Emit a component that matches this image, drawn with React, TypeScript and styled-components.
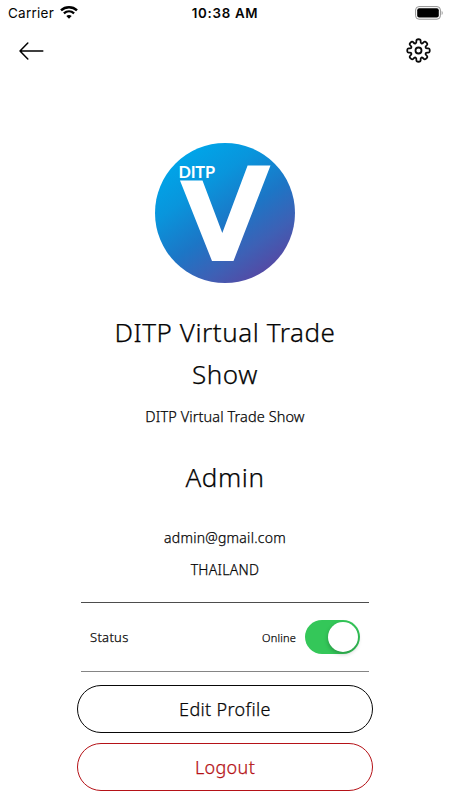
import React from "react";
import styled, { createGlobalStyle } from "styled-components";

const GlobalStyle = createGlobalStyle`
  * { box-sizing: border-box; }
  body { margin: 0; background: #fff; color: #050505; }
  button { padding: 0; background: none; border: 0; color: inherit; cursor: pointer; }
`;

const Screen = styled.div`
  width: 450px;
  height: 800px;
  overflow: hidden;
  display: flex;
  flex-direction: column;
  background: #fff;
  font-family: "Noto Sans", "Open Sans", sans-serif;
  font-weight: 300;
`;

const StatusBar = styled.header`
  flex: none;
  height: 26px;
  padding: 0 7px 1px 8px;
  display: grid;
  grid-template-columns: 1fr auto 1fr;
  align-items: center;
  font-family: Inter, sans-serif;
  font-size: 13.5px;
  font-weight: 400;
`;

const Carrier = styled.div`
  display: flex;
  align-items: center;
  gap: 6px;
  letter-spacing: 0.25px;
`;

const Clock = styled.time`
  margin-right: 1px;
  font-size: 13.3px;
  font-weight: 600;
  letter-spacing: 0.7px;
`;

const BatterySlot = styled.div`
  display: flex;
  justify-content: flex-end;
`;

const NavBar = styled.nav`
  flex: none;
  height: 49px;
  padding: 0 19px;
  display: flex;
  align-items: center;
  justify-content: space-between;
`;

const IconButton = styled.button`
  display: flex;
`;

const Profile = styled.main`
  flex: none;
  width: 296px;
  margin: 68px auto 0 77px;
  display: flex;
  flex-direction: column;
  align-items: center;
  -webkit-text-stroke: 0.25px currentColor;
`;

const Logo = styled.svg`
  display: block;
  flex: none;
  margin: 0 0 28px;
  -webkit-text-stroke: 0;
`;

interface LineProps {
  $size: number;
  $line: number;
  $spacing?: number;
  $gap?: number;
}

const Line = styled.p<LineProps>`
  width: 260px;
  margin: 0 0 ${(p) => p.$gap ?? 0}px;
  text-align: center;
  font-weight: 300;
  font-size: ${(p) => p.$size}px;
  line-height: ${(p) => p.$line}px;
  letter-spacing: ${(p) => p.$spacing ?? 0}px;
`;

const StatusRow = styled.section`
  width: 288px;
  height: 70px;
  margin-bottom: 13px;
  padding: 0 9px;
  display: flex;
  align-items: center;
  border-top: 1px solid #4d4d4d;
  border-bottom: 1px solid #858585;
`;

const StatusLabel = styled.span`
  flex: 1;
  font-size: 13px;
  letter-spacing: 0.3px;
`;

const StatusValue = styled.span`
  margin-right: 9px;
  font-size: 11px;
  letter-spacing: 0.2px;
`;

const Switch = styled.button`
  width: 55px;
  height: 34px;
  padding: 2px;
  display: flex;
  justify-content: flex-end;
  border-radius: 17px;
  background: #34c759;
`;

const Thumb = styled.span`
  width: 30px;
  height: 30px;
  border-radius: 50%;
  background: #fff;
  box-shadow: 0 2px 4px rgba(0, 0, 0, 0.25);
`;

const PillButton = styled.button<{ $tone: string }>`
  width: 296px;
  height: 48px;
  margin-bottom: 10px;
  border: 1.5px solid ${(p) => p.$tone};
  border-radius: 24px;
  color: ${(p) => p.$tone};
  font-family: "Noto Sans", sans-serif;
  font-size: 18px;
  font-weight: 300;
  line-height: 46px;
  letter-spacing: 0.35px;
  -webkit-text-stroke: 0.25px currentColor;
`;

const WifiIcon = () => (
  <svg width="18" height="13" viewBox="0 0 18 13" fill="none" stroke="#000">
    <path d="M1 4.4C5.6.2 12.4.2 17 4.4" strokeWidth="2.5" />
    <path d="M3.9 7.4c3-2.7 7.2-2.7 10.2 0" strokeWidth="2.3" />
    <path d="M9 12.8 6.3 10.1c1.6-1.5 3.8-1.5 5.4 0z" fill="#000" stroke="none" />
  </svg>
);

const BatteryIcon = () => (
  <svg width="28" height="14" viewBox="0 0 28 14">
    <rect x=".6" y=".6" width="24.8" height="12.6" rx="3.4" fill="none" stroke="#929292" />
    <rect x="2.2" y="2.2" width="21.6" height="9.4" rx="2" fill="#000" />
    <path d="M26.7 4.7c1.3.8 1.3 3.6 0 4.4z" fill="#929292" />
  </svg>
);

const BackIcon = () => (
  <svg width="25" height="18" viewBox="0 0 25 18" fill="none" stroke="#000" strokeWidth="1.5" strokeLinecap="round" strokeLinejoin="round">
    <path d="M8.8 1 1 9l7.8 8M1 9h22.8" />
  </svg>
);

// Eight rounded teeth: each pair is [angle offset in degrees, radius].
const toothProfile: [number, number][] = [
  [-14, 7.8],
  [-12, 11.5],
  [12, 11.5],
  [14, 7.8],
];

const gearPath = (() => {
  const points = Array.from({ length: 8 }).flatMap((_, tooth) =>
    toothProfile.map(([offset, radius]) => {
      const angle = ((tooth * 45 + offset) * Math.PI) / 180;
      return [12.5 + radius * Math.sin(angle), 12.5 - radius * Math.cos(angle)];
    })
  );
  const mid = (i: number) => {
    const a = points[i % points.length];
    const b = points[(i + 1) % points.length];
    return `${((a[0] + b[0]) / 2).toFixed(2)} ${((a[1] + b[1]) / 2).toFixed(2)}`;
  };
  return (
    `M${mid(points.length - 1)}` +
    points.map((p, i) => `Q${p[0].toFixed(2)} ${p[1].toFixed(2)} ${mid(i)}`).join("") +
    "Z"
  );
})();

const GearIcon = () => (
  <svg width="25" height="25" viewBox="0 0 25 25" fill="none" stroke="#0a0a0a" strokeWidth="1.8" strokeLinejoin="round">
    <path d={gearPath} />
    <circle cx="12.5" cy="12.5" r="3" />
  </svg>
);

const BrandLogo = () => (
  <Logo width="140" height="140" viewBox="0 0 140 140" role="img" aria-label="DITP V">
    <defs>
      <linearGradient id="brand" x1=".18" y1=".12" x2=".76" y2=".95">
        <stop offset="0" stopColor="#00a4e8" />
        <stop offset=".25" stopColor="#0995dc" />
        <stop offset=".55" stopColor="#1c76c6" />
        <stop offset=".8" stopColor="#3e60b5" />
        <stop offset="1" stopColor="#5549a4" />
      </linearGradient>
    </defs>
    <circle cx="70" cy="70" r="70" fill="url(#brand)" />
    <path d="M25 37.5h22.5L67.3 90 92.6 22.5H115.5L78.5 118H57z" fill="#fff" />
    <text x="23.5" y="34.5" fill="#fff" fontFamily="Lato, sans-serif" fontSize="16.3" fontWeight="700" textLength="36.5">DITP</text>
  </Logo>
);

export default function App() {
  return (
    <>
      <GlobalStyle />
      <Screen>
        <StatusBar>
          <Carrier>Carrier <WifiIcon /></Carrier>
          <Clock>10:38 AM</Clock>
          <BatterySlot><BatteryIcon /></BatterySlot>
        </StatusBar>
        <NavBar>
          <IconButton aria-label="Back"><BackIcon /></IconButton>
          <IconButton aria-label="Settings"><GearIcon /></IconButton>
        </NavBar>
        <Profile>
          <BrandLogo />
          <Line as="h1" $size={26} $line={42} $gap={8} $spacing={0.55}>DITP Virtual Trade Show</Line>
          <Line $size={14.5} $line={26} $gap={27} $spacing={0.1}>DITP Virtual Trade Show</Line>
          <Line as="h2" $size={26} $line={42} $gap={28} $spacing={0.6}>Admin</Line>
          <Line $size={14} $line={24} $gap={8} $spacing={0.25}>admin@gmail.com</Line>
          <Line $size={14} $line={24} $gap={20} $spacing={0.3}>THAILAND</Line>
          <StatusRow>
            <StatusLabel>Status</StatusLabel>
            <StatusValue>Online</StatusValue>
            <Switch role="switch" aria-checked="true" aria-label="Online status"><Thumb /></Switch>
          </StatusRow>
          <PillButton $tone="#080808">Edit Profile</PillButton>
          <PillButton $tone="#b51217">Logout</PillButton>
        </Profile>
      </Screen>
    </>
  );
}
